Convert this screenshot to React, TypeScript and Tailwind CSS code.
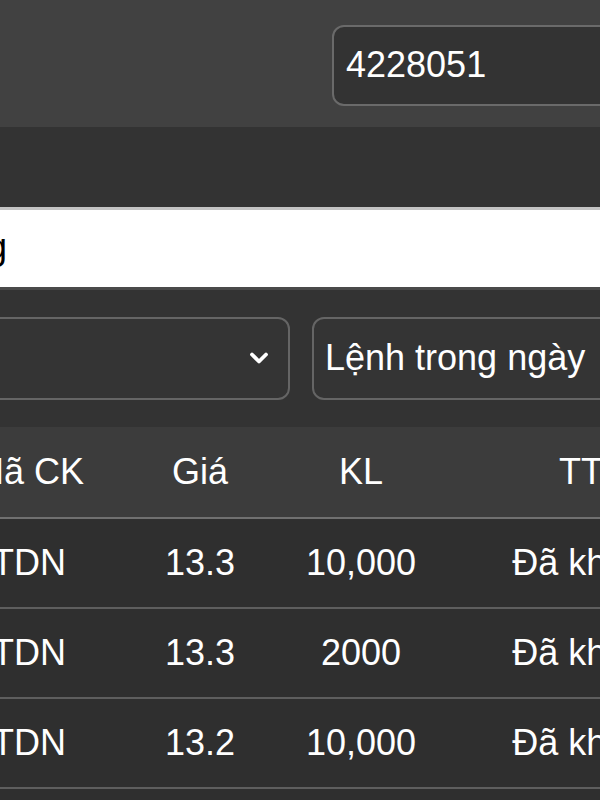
import React from "react";

const rows = [
  { ck: "TDN", gia: "13.3", kl: "10,000", tt: "Đã khớp" },
  { ck: "TDN", gia: "13.3", kl: "2000", tt: "Đã khớp" },
  { ck: "TDN", gia: "13.2", kl: "10,000", tt: "Đã khớp" },
];

function Chevron() {
  return (
    <svg width="20" height="14" viewBox="0 0 20 14" fill="none">
      <polyline
        points="3,3.5 10,10.5 17,3.5"
        stroke="white"
        strokeWidth="3.8"
        strokeLinecap="round"
        strokeLinejoin="round"
      />
    </svg>
  );
}

export default function App() {
  return (
    <div
      className="w-[600px] h-[800px] overflow-hidden bg-[#2f2f2f] text-white text-[36px] leading-none"
      style={{ fontFamily: '"Liberation Sans", Arial, sans-serif' }}
    >
      {/* top bar */}
      <div className="h-[127px] bg-[#414141] flex items-start pt-[25px] pl-[332px]">
        <div className="shrink-0 w-[420px] h-[81px] rounded-[12px] border-2 border-[#6a6a6a] bg-[#333333] flex items-center pl-[12px] pb-[2px]">
          4228051
        </div>
      </div>

      {/* dark band */}
      <div className="h-[80px] bg-[#333333]" />

      {/* white bar */}
      <div className="h-[83px] bg-white border-t-[3px] border-t-[#c4c4c4] border-b-[3px] border-b-[#4a4a4a] flex items-center overflow-hidden">
        <div className="shrink-0 -ml-[300px] w-[307px] text-right text-black pb-[4px]">
          Lệnh thường
        </div>
      </div>

      {/* filters */}
      <div className="h-[137px] bg-[#333333] pt-[27px] flex gap-[22px]">
        <div className="shrink-0 -ml-[120px] w-[410px] h-[83px] rounded-[12px] border-2 border-[#656565] bg-[#343434] flex items-center justify-end pr-[19px] pb-[2px]">
          <Chevron />
        </div>
        <div className="shrink-0 w-[420px] h-[83px] rounded-[12px] border-2 border-[#656565] bg-[#343434] flex items-center pl-[11px] pb-[2px]">
          Lệnh trong ngày
        </div>
      </div>

      {/* header */}
      <div className="h-[92px] bg-[#3c3c3c] border-b-2 border-[#707070] grid grid-cols-[178px_164px_158px_282px] items-center -ml-[60px] w-[782px]">
        <div className="text-center">Mã CK</div>
        <div className="text-center">Giá</div>
        <div className="text-center">KL</div>
        <div className="text-center">TT</div>
      </div>

      {/* rows */}
      {rows.map((r, i) => (
        <div
          key={i}
          className="h-[90px] bg-[#2f2f2f] border-b-2 border-[#5e5e5e] grid grid-cols-[178px_164px_158px_282px] items-center -ml-[60px] w-[782px]"
        >
          <div className="text-center">{r.ck}</div>
          <div className="text-center">{r.gia}</div>
          <div className="text-center">{r.kl}</div>
          <div className="text-center">{r.tt}</div>
        </div>
      ))}
    </div>
  );
}
